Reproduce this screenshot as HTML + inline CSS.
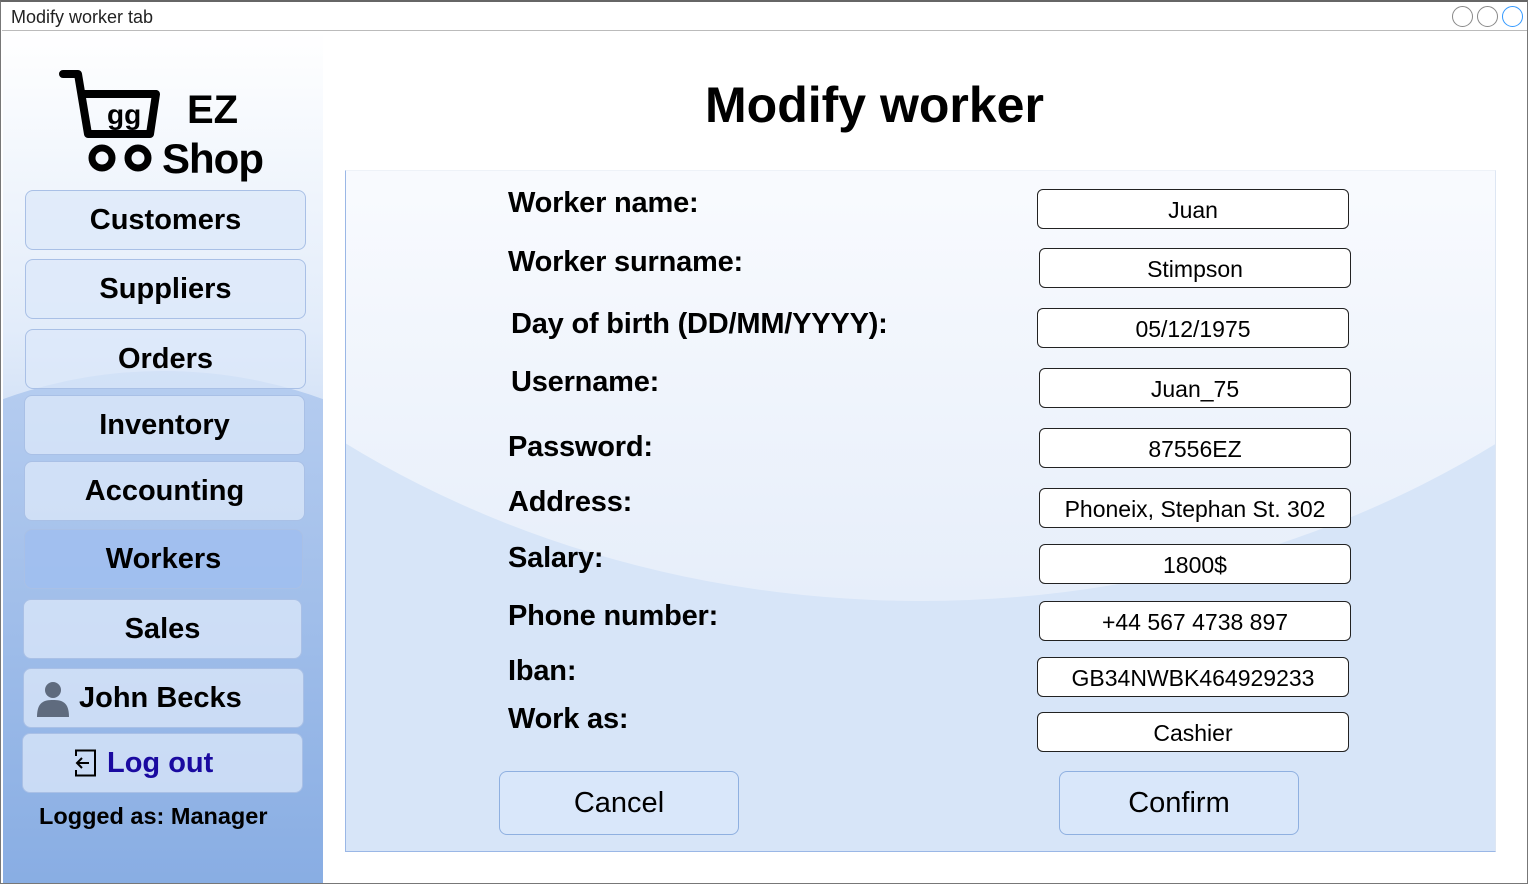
<!DOCTYPE html>
<html><head><style>
body{margin:0;width:1528px;height:883px;position:relative;overflow:hidden;font-family:"Liberation Sans",Arial,sans-serif;background:#fff}
.frame{position:absolute;left:0;top:0;width:1526px;height:881px;border:1px solid #777;border-top:2px solid #666}
.title{position:absolute;left:11px;top:7px;font-size:18px;color:#222}
.hline{position:absolute;left:2px;top:30px;width:1525px;height:1px;background:#bbb}
.circ{position:absolute;top:6px;width:19px;height:19px;border:1.5px solid #888;border-radius:50%}
.side{position:absolute;left:3px;top:31px;width:320px;height:852px;background:linear-gradient(#fff 0%,#e2ecfa 35%,#c6d8f3 55%,#7ea6e0 100%);overflow:hidden}
.side:before{content:"";position:absolute;left:-300px;top:340px;width:920px;height:900px;border-radius:50%;background:linear-gradient(#b6cdf0,#7ea6e0 70%)}
.nb{position:absolute;height:58px;border:1px solid #a9c0e6;border-radius:8px;background:rgba(220,232,250,.75);font-weight:bold;font-size:29px;text-align:center;line-height:58px;color:#000}
.panel{position:absolute;left:345px;top:170px;width:1149px;height:680px;border:1px solid #9ab7e6;border-top-color:#eef2f8;border-right-color:#dde6f3;background:#d7e5f8;overflow:hidden}
.panel:before{content:"";position:absolute;left:-400px;top:-1206px;width:1950px;height:1636px;border-radius:50%;background:linear-gradient(#f8fafe 75%,#e6eefa)}
.lb{position:absolute;font-weight:bold;font-size:29px;color:#000;letter-spacing:-0.2px}
.in{position:absolute;width:310px;height:38px;border:1px solid #222;border-radius:6px;background:#fff;font-size:23px;text-align:center;line-height:40px}
.bt{position:absolute;top:771px;width:238px;height:62px;border:1px solid #8fb0e0;border-radius:8px;background:#d9e7fa;font-size:29px;text-align:center;line-height:62px}
</style></head><body>
<div class="frame"></div>
<div class="title">Modify worker tab</div>
<div class="hline"></div>
<div class="circ" style="left:1452px"></div><div class="circ" style="left:1477px"></div><div class="circ" style="left:1502px;border-color:#3399ff"></div>
<div class="side"></div>
<svg style="position:absolute;left:58px;top:68px" width="110" height="110" viewBox="0 0 110 110">
<path d="M5 6 H20 L30 66 H92 L98 26 H24" fill="none" stroke="#000" stroke-width="8" stroke-linejoin="round" stroke-linecap="round"/>
<text x="49" y="56" font-family="Liberation Sans" font-weight="bold" font-size="28">gg</text>
<circle cx="44" cy="90" r="10" fill="none" stroke="#000" stroke-width="7"/>
<circle cx="80" cy="90" r="10" fill="none" stroke="#000" stroke-width="7"/>
</svg>
<div style="position:absolute;left:187px;top:88px;font-weight:bold;font-size:40px">EZ</div>
<div style="position:absolute;left:162px;top:135px;font-weight:bold;font-size:42px;letter-spacing:-1px">Shop</div>
<div class="nb" style="left:25px;top:190px;width:279px">Customers</div>
<div class="nb" style="left:25px;top:259px;width:279px">Suppliers</div>
<div class="nb" style="left:25px;top:329px;width:279px">Orders</div>
<div class="nb" style="left:24px;top:395px;width:279px">Inventory</div>
<div class="nb" style="left:24px;top:461px;width:279px">Accounting</div>
<div class="nb" style="left:24px;top:529px;width:277px;background:rgba(160,190,240,.85)">Workers</div>
<div class="nb" style="left:23px;top:599px;width:277px">Sales</div>
<div class="nb" style="left:23px;top:668px;width:279px;text-align:left"><svg style="position:absolute;left:12px;top:11px" width="34" height="38" viewBox="0 0 34 38"><circle cx="17" cy="10" r="8" fill="#5f6b7e"/><path d="M1 37 C1 22 8 20 17 20 C26 20 33 22 33 37Z" fill="#5f6b7e"/></svg><span style="position:absolute;left:55px">John Becks</span></div>
<div class="nb" style="left:22px;top:733px;width:279px;color:#1a0aa0;text-align:left"><svg style="position:absolute;left:50px;top:15px" width="24" height="28" viewBox="0 0 24 28"><path d="M3 7 V1.5 H22 V26.5 H3 V21" fill="none" stroke="#000" stroke-width="2"/><path d="M16 14 H4 M9 9 L4 14 L9 19" fill="none" stroke="#000" stroke-width="2"/></svg><span style="position:absolute;left:84px">Log out</span></div>
<div style="position:absolute;left:39px;top:803px;font-weight:bold;font-size:23.5px">Logged as: Manager</div>
<div style="position:absolute;left:705px;top:76px;font-weight:bold;font-size:50px">Modify worker</div>
<div class="panel"></div>
<div class="lb" style="left:508px;top:187px">Worker name:</div>
<div class="lb" style="left:508px;top:246px">Worker surname:</div>
<div class="lb" style="left:511px;top:308px">Day of birth (DD/MM/YYYY):</div>
<div class="lb" style="left:511px;top:366px">Username:</div>
<div class="lb" style="left:508px;top:431px">Password:</div>
<div class="lb" style="left:508px;top:486px">Address:</div>
<div class="lb" style="left:508px;top:542px">Salary:</div>
<div class="lb" style="left:508px;top:600px">Phone number:</div>
<div class="lb" style="left:508px;top:655px">Iban:</div>
<div class="lb" style="left:508px;top:703px">Work as:</div>
<div class="in" style="left:1037px;top:189px">Juan</div>
<div class="in" style="left:1039px;top:248px">Stimpson</div>
<div class="in" style="left:1037px;top:308px">05/12/1975</div>
<div class="in" style="left:1039px;top:368px">Juan_75</div>
<div class="in" style="left:1039px;top:428px">87556EZ</div>
<div class="in" style="left:1039px;top:488px">Phoneix, Stephan St. 302</div>
<div class="in" style="left:1039px;top:544px">1800$</div>
<div class="in" style="left:1039px;top:601px">+44 567 4738 897</div>
<div class="in" style="left:1037px;top:657px">GB34NWBK464929233</div>
<div class="in" style="left:1037px;top:712px">Cashier</div>
<div class="bt" style="left:499px">Cancel</div>
<div class="bt" style="left:1059px">Confirm</div>
</body></html>
